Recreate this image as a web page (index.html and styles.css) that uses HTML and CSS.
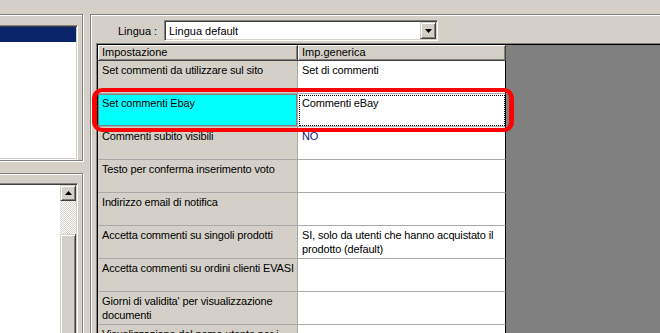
FILE: index.html
```html
<!DOCTYPE html>
<html>
<head>
<meta charset="utf-8">
<link rel="stylesheet" href="styles.css">
</head>
<body>
<div class="screen">
  <div class="left">
    <div class="group g1">
      <div class="list l1"><div class="sel"></div></div>
    </div>
    <div class="group g2">
      <div class="list l2">
        <div class="sb">
          <div class="sbbtn"><svg width="7" height="4" viewBox="0 0 7 4"><polygon points="3.5,0 7,4 0,4" fill="#000"/></svg></div>
          <div class="track"></div>
          <div class="thumb"></div>
        </div>
      </div>
    </div>
  </div>
  <div class="group right">
    <div class="lang-row">
      <span class="lbl">Lingua :</span>
      <div class="combo">
        <span class="combo-text">Lingua default</span>
        <div class="ddbtn"><svg width="7" height="4" viewBox="0 0 7 4"><polygon points="0,0 7,0 3.5,4" fill="#000"/></svg></div>
      </div>
    </div>
    <div class="gridframe">
      <div class="gridinner">
        <div class="table">
          <div class="row head">
            <div class="hc c1">Impostazione</div>
            <div class="hc c2">Imp.generica</div>
          </div>
          <div class="row">
            <div class="cell c1">Set commenti da utilizzare sul sito</div>
            <div class="cell c2">Set di commenti</div>
          </div>
          <div class="row">
            <div class="cell c1 cyan">Set commenti Ebay</div>
            <div class="cell c2 focus">Commenti eBay</div>
          </div>
          <div class="row">
            <div class="cell c1">Commenti subito visibili</div>
            <div class="cell c2 val-blue">NO</div>
          </div>
          <div class="row">
            <div class="cell c1">Testo per conferma inserimento voto</div>
            <div class="cell c2"></div>
          </div>
          <div class="row">
            <div class="cell c1">Indirizzo email di notifica</div>
            <div class="cell c2"></div>
          </div>
          <div class="row">
            <div class="cell c1">Accetta commenti su singoli prodotti</div>
            <div class="cell c2">SI, solo da utenti che hanno acquistato il<br>prodotto (default)</div>
          </div>
          <div class="row">
            <div class="cell c1">Accetta commenti su ordini clienti EVASI</div>
            <div class="cell c2"></div>
          </div>
          <div class="row">
            <div class="cell c1">Giorni di validita' per visualizzazione<br>documenti</div>
            <div class="cell c2"></div>
          </div>
          <div class="row">
            <div class="cell c1">Visualizzazione del nome utente per i</div>
            <div class="cell c2"></div>
          </div>
        </div>
        <div class="filler"></div>
      </div>
    </div>
  </div>
</div>
<div class="annot"></div>
</body>
</html>
```

FILE: styles.css
```css
html, body {
  margin: 0;
  padding: 0;
}
body {
  background: #d4d0c8;
  font-family: "Liberation Sans", Arial, sans-serif;
  font-size: 11px;
  color: #000;
  width: 660px;
  height: 333px;
  overflow: hidden;
  position: relative;
}
.screen {
  display: flex;
  padding-top: 14px;
  height: 333px;
  box-sizing: border-box;
}
.left {
  width: 84px;
  flex: none;
  display: flex;
  flex-direction: column;
}
.group {
  border: 1px solid #808080;
  box-shadow: inset 1px 1px 0 #fff, 1px 1px 0 #fff;
  box-sizing: border-box;
}
.g1 {
  margin-left: -4px;
  width: 87px;
  height: 152px;
  padding: 10px 4px 0 0;
}
.g2 {
  margin-left: -4px;
  width: 87px;
  margin-top: 12px;
  height: 400px;
  padding: 9px 4px 0 0;
}
.list {
  background: #fff;
  border: 1px solid;
  border-color: #808080 #fff #fff #808080;
  box-shadow: inset 1px 1px 0 #404040, inset -1px -1px 0 #d4d0c8;
  padding: 1px;
  box-sizing: border-box;
}
.l1 {
  height: 135px;
}
.sel {
  height: 15px;
  background: #0a246a;
}
.l2 {
  height: 300px;
  display: flex;
  justify-content: flex-end;
}
.sb {
  width: 16px;
  display: flex;
  flex-direction: column;
}
.sbbtn, .thumb, .ddbtn {
  background: #d4d0c8;
  border: 1px solid;
  border-color: #d4d0c8 #404040 #404040 #d4d0c8;
  box-shadow: inset 1px 1px 0 #fff, inset -1px -1px 0 #808080;
  box-sizing: border-box;
}
.sbbtn {
  height: 16px;
  display: flex;
  align-items: center;
  justify-content: center;
}
.track {
  height: 33px;
  background-color: #fff;
  background-image: repeating-conic-gradient(#d4d0c8 0 25%, #fff 0 50%);
  background-size: 2px 2px;
}
.thumb {
  height: 200px;
}
.right {
  flex: 1;
  margin-left: 6px;
  margin-right: -20px;
  border-right: none;
  border-bottom: none;
  display: flex;
  flex-direction: column;
}
.lang-row {
  display: flex;
  align-items: center;
  margin-top: 5px;
  padding-left: 27px;
  height: 21px;
}
.lbl {
  width: 46px;
  flex: none;
}
.combo {
  width: 274px;
  height: 21px;
  box-sizing: border-box;
  background: #fff;
  border: 1px solid;
  border-color: #808080 #fff #fff #808080;
  box-shadow: inset 1px 1px 0 #404040, inset -1px -1px 0 #d4d0c8;
  padding: 1px;
  display: flex;
  align-items: center;
}
.combo-text {
  flex: 1;
  padding-left: 3px;
}
.ddbtn {
  width: 16px;
  height: 17px;
  display: flex;
  align-items: center;
  justify-content: center;
}
.gridframe {
  margin-top: 2px;
  margin-left: 5px;
  border-top: 1px solid #808080;
  border-left: 1px solid #808080;
  flex: 1;
  display: flex;
}
.gridinner {
  border-top: 1px solid #000;
  border-left: 1px solid #000;
  flex: 1;
  display: flex;
}
.table {
  width: 408px;
  flex: none;
  background: #fff;
}
.filler {
  flex: 1;
  background: #808080;
}
.row {
  display: flex;
  height: 33px;
}
.row.head {
  height: 16px;
}
.hc {
  background: #d4d0c8;
  border-right: 1px solid #404040;
  border-bottom: 1px solid #404040;
  box-shadow: inset 1px 1px 0 #fff, inset -1px -1px 0 #808080;
  box-sizing: border-box;
  padding: 0 4px;
  line-height: 14px;
  white-space: nowrap;
}
.c1 {
  width: 200px;
  flex: none;
}
.c2 {
  width: 208px;
  flex: none;
}
.cell {
  box-sizing: border-box;
  padding: 2px 4px 0 4px;
  line-height: 14px;
  border-bottom: 1px solid #a8a8a8;
  white-space: nowrap;
  overflow: hidden;
  letter-spacing: -0.15px;
}
.cell.c1 {
  background: #d4d0c8;
  border-right: 1px solid #a8a8a8;
}
.cell.c2 {
  background: #fff;
  border-right: 1px solid #000;
}
.cell.cyan {
  background: #00ffff;
  box-shadow: inset 1px 1px 0 #808080, inset -1px -1px 0 #808080;
}
.cell.focus {
  outline: 1px dotted #000;
  outline-offset: -2px;
}
.val-blue {
  color: #14147a;
}
.annot {
  position: absolute;
  left: 92px;
  top: 88px;
  width: 422px;
  height: 44px;
  box-sizing: border-box;
  border-style: solid;
  border-color: #ff0000;
  border-width: 4px 5px;
  border-radius: 10px;
}
```
